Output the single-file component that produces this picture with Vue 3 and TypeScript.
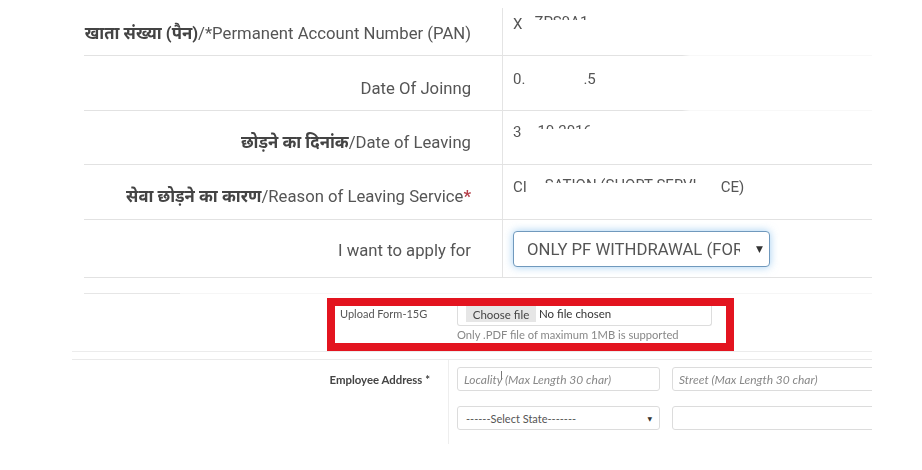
<script setup lang="ts">
interface Row {
  hindi: string
  label: string
  star?: boolean
  parts: { text: string; cut?: boolean; gap?: number }[]
}

const rows: Row[] = [
  {
    hindi: 'खाता संख्या (पैन)',
    label: '/*Permanent Account Number (PAN)',
    parts: [{ text: 'X' }, { text: 'ZPS9A1', cut: true, gap: 12 }],
  },
  {
    hindi: '',
    label: 'Date Of Joinng',
    parts: [{ text: '0.' }, { text: '.5', gap: 58 }],
  },
  {
    hindi: 'छोड़ने का दिनांक',
    label: '/Date of Leaving',
    parts: [{ text: '3' }, { text: '10.2016', cut: true, gap: 16 }],
  },
  {
    hindi: 'सेवा छोड़ने का कारण',
    label: '/Reason of Leaving Service',
    star: true,
    parts: [
      { text: 'CI' },
      { text: 'SATION (SHORT SERVI', cut: true, gap: 18 },
      { text: 'CE)', gap: 24 },
    ],
  },
]
</script>

<template>
  <div class="page">
    <section class="table">
      <div v-for="(row, i) in rows" :key="i" class="row" :class="{ faded: i < 2 }">
        <div class="label">
          <b>{{ row.hindi }}</b>{{ row.label }}<span v-if="row.star" class="star">*</span>
        </div>
        <div class="value">
          <span
            v-for="(part, j) in row.parts"
            :key="j"
            :class="{ cut: part.cut }"
            :style="part.gap ? { marginLeft: part.gap + 'px' } : undefined"
          >{{ part.text }}</span>
        </div>
      </div>
      <div class="row last">
        <div class="label">I want to apply for</div>
        <div class="value">
          <div class="select-wrap">
            <select class="apply">
              <option>ONLY PF WITHDRAWAL (FORM 19)</option>
            </select>
            <span class="arrow">▼</span>
          </div>
        </div>
      </div>
    </section>

    <section class="upload-band">
      <div class="red-box">
        <div class="upload-label">Upload Form-15G</div>
        <div class="upload-body">
          <div class="file-box">
            <button class="choose" type="button">Choose file</button>
            <span>No file chosen</span>
          </div>
          <p class="help">Only .PDF file of maximum 1MB is supported</p>
        </div>
      </div>
    </section>

    <section class="address">
      <div class="address-label">Employee Address *</div>
      <div class="address-grid">
        <div class="locality">
          <input class="field" placeholder="Locality (Max Length 30 char)" />
          <span class="cursor"></span>
        </div>
        <input class="field" placeholder="Street (Max Length 30 char)" />
        <div class="field state">
          <span>------Select State-------</span>
          <span class="small-arrow">▼</span>
        </div>
        <input class="field" />
      </div>
    </section>
  </div>
</template>

<style>
html,
body {
  margin: 0;
  background: #fff;
  overflow: hidden;
}
</style>

<style scoped>
.page {
  width: 800px;
  height: 470px;
  margin-left: 72px;
  overflow: hidden;
  color: #555;
  font-family: Roboto, "Noto Sans", sans-serif;
  filter: blur(0.55px);
}

.table {
  margin-left: 12px;
}

.row {
  display: grid;
  grid-template-columns: 418px 1fr;
  height: 53px;
  border-bottom: 1px solid #e2e2e2;
}

.row:nth-child(4) {
  height: 54px;
}

.row.faded {
  height: 55px;
  border-bottom: 0;
  background: linear-gradient(90deg, #e2e2e2 0, #e2e2e2 598px, #f8f8f8 606px, #f8f8f8 100%) bottom / 100% 1px no-repeat;
}

.row.faded:first-child {
  height: 56px;
}

.label {
  align-self: end;
  padding: 0 31px 11px 0;
  text-align: right;
  font-size: 16.7px;
  line-height: 20px;
  white-space: nowrap;
}

.faded .label {
  padding-bottom: 12px;
}

.row:nth-child(4) .label {
  padding-bottom: 12px;
}

.label b {
  color: #444;
}

.star {
  color: #b5404a;
  font-weight: 700;
}

.value {
  display: flex;
  align-items: flex-end;
  padding: 0 0 22px 10px;
  border-left: 1px solid #e4e4e4;
  font-size: 15px;
  line-height: 20px;
  white-space: nowrap;
}

.row:first-child .value {
  margin-top: 8px;
}

/* partly masked values: only the top of the glyphs is left */
.cut {
  display: inline-block;
  height: 8px;
  overflow: hidden;
  align-self: flex-start;
  margin-top: 10px;
  line-height: 20px;
}

.row:first-child .cut {
  margin-top: 4px;
}

.row.last {
  height: 57px;
}

.row.last .label {
  padding-bottom: 16px;
}

.row.last .value {
  padding-bottom: 10px;
}

.select-wrap {
  position: relative;
  width: 257px;
  height: 36px;
}

.apply {
  appearance: none;
  box-sizing: border-box;
  width: 100%;
  height: 100%;
  padding: 0 29px 0 13px;
  border: 1.5px solid #7099bd;
  border-radius: 4px;
  outline: 0;
  background: #fff;
  box-shadow: 0 0 8px rgba(102, 175, 233, 0.6);
  color: #555;
  font: 16.7px Roboto, sans-serif;
}

.arrow {
  position: absolute;
  top: 12px;
  right: 7px;
  color: #333;
  font-size: 9px;
  line-height: 12px;
  font-family: "DejaVu Sans", sans-serif;
}

.upload-band {
  height: 82px;
  box-sizing: border-box;
  padding: 20px 0 0 255px;
  background:
    linear-gradient(90deg, transparent 12px, #e6e6e6 12px, #e6e6e6 108px, #f6f6f6 108px) 0 15px / 100% 1px no-repeat,
    linear-gradient(#ececec, #ececec) 0 73px / 100% 1px no-repeat,
    linear-gradient(#eaeaea, #eaeaea) 0 81px / 100% 1px no-repeat;
}

.red-box {
  display: grid;
  grid-template-columns: 114px 1fr;
  box-sizing: border-box;
  width: 407px;
  height: 53px;
  border: 8px solid #e3141f;
  background: #fff;
  font-family: Lato, sans-serif;
}

.upload-label {
  padding: 1px 0 0 5px;
  color: #555;
  font-size: 11px;
  line-height: 13px;
  white-space: nowrap;
}

.upload-body {
  margin-left: 8px;
}

/* top edge of the box sits under the red frame */
.file-box {
  display: flex;
  align-items: flex-start;
  gap: 3px;
  width: 255px;
  height: 20px;
  box-sizing: border-box;
  padding-left: 8px;
  border: 1px solid #ddd;
  border-top: 0;
  border-radius: 0 0 3px 3px;
  color: #333;
  font-size: 11.5px;
  line-height: 15px;
  white-space: nowrap;
}

.choose {
  width: 70px;
  height: 16px;
  padding: 0;
  border: 0;
  background: #e6e6e6;
  color: #444;
  font: 11.5px/15px Lato, sans-serif;
}

.help {
  margin: 2px 0 0;
  color: #888;
  font-size: 11.2px;
  line-height: 13px;
  white-space: nowrap;
}

.address {
  display: grid;
  grid-template-columns: 377px 1fr;
  height: 87px;
  font-family: Lato, sans-serif;
}

.address-label {
  padding-top: 13px;
  padding-right: 18px;
  border-right: 1px solid #eee;
  height: 71px;
  color: #444;
  font-size: 11.4px;
  font-weight: 700;
  line-height: 14px;
  text-align: right;
  white-space: nowrap;
}

.address-grid {
  display: grid;
  grid-template-columns: 203px 240px;
  grid-auto-rows: 24px;
  gap: 15px 12px;
  padding: 7px 0 0 8px;
}

.field {
  box-sizing: border-box;
  width: 100%;
  min-width: 0;
  height: 24px;
  padding: 0 6px;
  border: 1.5px solid #dcdcdc;
  border-radius: 3px;
  background: #fff;
  outline: 0;
  font: italic 12px Lato, sans-serif;
}

.field::placeholder {
  color: #888;
  opacity: 1;
}

.locality {
  position: relative;
}

/* mouse text cursor caught in the screenshot */
.cursor {
  position: absolute;
  top: 4px;
  left: 44px;
  width: 1px;
  height: 9px;
  background: #777;
}

.state {
  display: flex;
  align-items: center;
  justify-content: space-between;
  padding: 0 7px 0 8px;
  color: #555;
  font-size: 11px;
  font-style: normal;
}

.small-arrow {
  color: #333;
  font-size: 6px;
  font-family: "DejaVu Sans", sans-serif;
}
</style>
